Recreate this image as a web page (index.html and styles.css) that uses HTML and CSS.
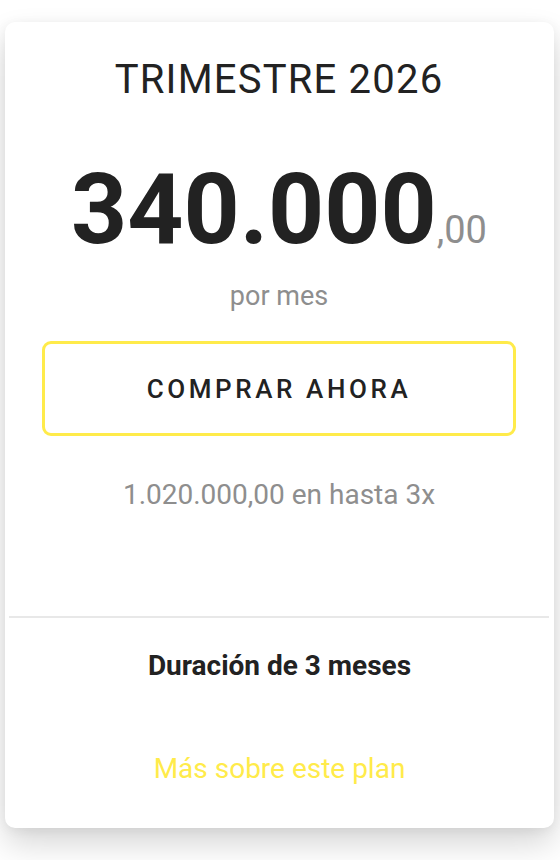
FILE: index.html
```html
<!DOCTYPE html>
<html lang="es">

<head>
    <meta charset="UTF-8">
    <meta name="viewport" content="width=device-width, initial-scale=1.0">
    <title>Trimestre 2026</title>
    <link rel="stylesheet" href="styles.css">
</head>

<body>

    <!-- Plan Card -->
    <div class="plan-card">
        <div class="plan-top">
            <h2 class="plan-title">TRIMESTRE 2026</h2>

            <div class="plan-price">
                <span class="price-main">340.000</span><span class="price-cents">,00</span>
            </div>
            <p class="price-period">por mes</p>

            <button class="buy-button">COMPRAR AHORA</button>

            <p class="price-total">1.020.000,00 en hasta 3x</p>
        </div>

        <div class="plan-bottom">
            <p class="plan-duration">Duración de 3 meses</p>
            <a href="#" class="plan-link">Más sobre este plan</a>
        </div>
    </div>

</body>

</html>
```

FILE: styles.css
```css
body {
    font-family: Roboto, "Noto Sans", Arial, sans-serif;
    background: #ffffff;
    color: #222222;
    margin: 0;
    padding: 22px 6px 0 5px;
    min-height: 860px;
    box-sizing: border-box;
}

.plan-card {
    background: #ffffff;
    border-radius: 10px;
    box-shadow: 0 16px 32px rgba(0, 0, 0, 0.16), 0 2px 12px rgba(0, 0, 0, 0.06);
    height: 806px;
    display: flex;
    flex-direction: column;
    text-align: center;
}

.plan-top {
    height: 594px;
    border-bottom: 2px solid #e8e8e8;
    margin: 0 5px 0 4px;
    padding: 0 33px;
}

.plan-title {
    font-size: 40px;
    font-weight: 400;
    letter-spacing: 1.2px;
    margin: 0;
    padding-top: 35px;
    line-height: 46px;
}

.plan-price {
    margin-top: 57px;
    line-height: 100px;
}

.price-main {
    font-size: 98px;
    font-weight: 700;
}

.price-cents {
    font-size: 38px;
    color: #8e8e8e;
}

.price-period {
    font-size: 27px;
    color: #8e8e8e;
    margin: -8px 0 0;
    line-height: 32px;
}

/* Buy Button */
.buy-button {
    display: block;
    width: 100%;
    height: 95px;
    margin-top: 29px;
    background: #ffffff;
    border: 3px solid #ffeb4a;
    border-radius: 9px;
    font-family: inherit;
    font-size: 26px;
    font-weight: 500;
    letter-spacing: 3.6px;
    color: #222222;
    cursor: pointer;
}

.price-total {
    font-size: 28px;
    color: #8e8e8e;
    margin: 42px 0 0;
    line-height: 34px;
}

.plan-bottom {
    display: flex;
    flex-direction: column;
    align-items: center;
}

.plan-duration {
    font-size: 28px;
    font-weight: 700;
    margin: 32px 0 0;
    line-height: 32px;
}

.plan-link {
    font-size: 28px;
    color: #ffeb4a;
    text-decoration: none;
    margin-top: 70px;
    line-height: 34px;
}
```
